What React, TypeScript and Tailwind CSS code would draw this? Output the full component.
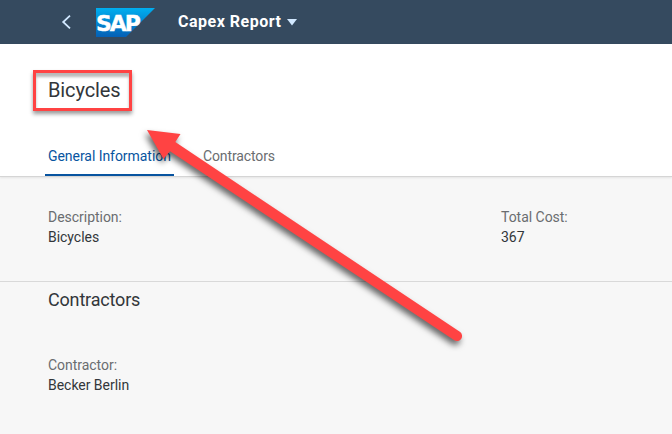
import React from "react";

function Field({ label, value }: { label: React.ReactNode; value: React.ReactNode }) {
  return (
    <div className="text-[14px] leading-5 tracking-[-0.03px]">
      <div className="text-[#6a6d70]">{label}</div>
      <div className="text-[#32363a]">{value}</div>
    </div>
  );
}

function SapLogo() {
  return (
    <svg width="59" height="30" viewBox="0 0 59 30" className="ml-[24px]">
      <defs>
        <linearGradient id="sap" x1="0" y1="0" x2="0" y2="1">
          <stop offset="0" stopColor="#00aeef" />
          <stop offset="1" stopColor="#0560b5" />
        </linearGradient>
      </defs>
      <path d="M0 1H59L30 30H0Z" fill="url(#sap)" />
      <text x="0" y="24" fill="#fff" stroke="#fff" strokeWidth="0.4" fontFamily="'DejaVu Sans', sans-serif" fontWeight="700" fontSize="22" letterSpacing="-2" textLength="43" lengthAdjust="spacingAndGlyphs">SAP</text>
    </svg>
  );
}

export default function App() {
  return (
    <div className="relative flex h-[434px] w-[672px] flex-col overflow-hidden bg-[#f7f7f7] font-['Roboto','Liberation_Sans',sans-serif]">
      <header className="flex h-[44px] shrink-0 items-center bg-[#354a5f] pl-[61px]">
        <svg width="11" height="16" viewBox="0 0 11 16" fill="none" stroke="#d1e8ff" strokeWidth="1.8">
          <path d="M9 1.7L2.2 8L9 14.3" />
        </svg>
        <SapLogo />
        <h1 className="ml-[23px] text-[16px] font-bold leading-5 tracking-[0.5px] text-white">Capex Report</h1>
        <svg width="10" height="7" viewBox="0 0 10 7" className="ml-[6px]">
          <path d="M0 0H10L5 6.5Z" fill="#d1e8ff" />
        </svg>
      </header>

      <section className="flex h-[133px] shrink-0 flex-col justify-between border-b border-[#d5d5d5] bg-white shadow-[0_1px_2px_rgba(0,0,0,0.08)]">
        <div className="ml-[33px] mt-[26px] flex h-[41px] w-[99px] items-center border-[3px] border-[#ff4343] pb-[2px] pl-[12px] shadow-[0_3px_4px_rgba(0,0,0,0.4),inset_0_4px_3px_rgba(0,0,0,0.28)]">
          <h2 className="text-[20px] leading-6 tracking-[-0.12px] text-[#32363a]">Bicycles</h2>
        </div>
        <nav className="flex pl-[45px] text-[14px] leading-5 tracking-[-0.05px]">
          <div className="h-[30px] w-[129px] border-b-2 border-[#0854a0] pl-[3px] text-[#0854a0]">General Information</div>
          <div className="pl-[29px] tracking-[-0.12px] text-[#6a6d70]">Contractors</div>
        </nav>
      </section>

      <section className="flex h-[105px] shrink-0 border-b border-[#d9d9d9] pl-[48px] pt-[30px]">
        <div className="w-[453px]"><Field label="Description:" value="Bicycles" /></div>
        <Field label="Total Cost:" value="367" />
      </section>

      <section className="pl-[48px] pt-[6px]">
        <h3 className="text-[18px] leading-6 tracking-[-0.18px] text-[#32363a]">Contractors</h3>
        <div className="mt-[43px]"><Field label="Contractor:" value="Becker Berlin" /></div>
      </section>

      <svg className="pointer-events-none absolute inset-0" width="672" height="434" viewBox="0 0 672 434">
        <g fill="#ff4343" className="drop-shadow-[-2px_4px_3px_rgba(0,0,0,0.6)]">
          <path d="M147 130L180.5 134L175.3 142.1L459.8 331.8A5 5 0 0 1 454.3 340.2L170 151.2L163.5 159Z" />
        </g>
      </svg>
    </div>
  );
}
